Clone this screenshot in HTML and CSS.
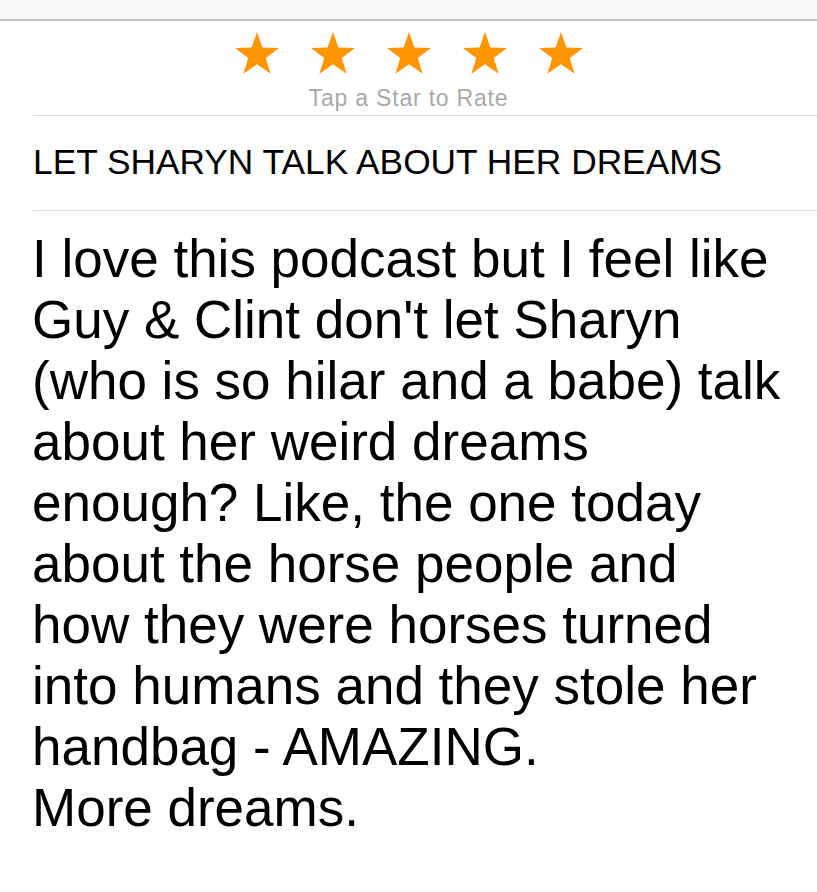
FILE: index.html
```html
<!DOCTYPE html>
<html lang="en">
<head>
<meta charset="utf-8">
<title>Write a Review</title>
<link rel="stylesheet" href="styles.css">
</head>
<body>
<div class="topbar"></div>
<main class="review">
  <section class="rating">
    <div class="stars">
      <svg class="star" viewBox="0 0 44 42"><polygon points="22,0 27.43,15.62 43.97,15.96 30.79,25.96 35.58,41.79 22,32.34 8.42,41.79 13.21,25.96 0.03,15.96 16.57,15.62"/></svg>
      <svg class="star" viewBox="0 0 44 42"><polygon points="22,0 27.43,15.62 43.97,15.96 30.79,25.96 35.58,41.79 22,32.34 8.42,41.79 13.21,25.96 0.03,15.96 16.57,15.62"/></svg>
      <svg class="star" viewBox="0 0 44 42"><polygon points="22,0 27.43,15.62 43.97,15.96 30.79,25.96 35.58,41.79 22,32.34 8.42,41.79 13.21,25.96 0.03,15.96 16.57,15.62"/></svg>
      <svg class="star" viewBox="0 0 44 42"><polygon points="22,0 27.43,15.62 43.97,15.96 30.79,25.96 35.58,41.79 22,32.34 8.42,41.79 13.21,25.96 0.03,15.96 16.57,15.62"/></svg>
      <svg class="star" viewBox="0 0 44 42"><polygon points="22,0 27.43,15.62 43.97,15.96 30.79,25.96 35.58,41.79 22,32.34 8.42,41.79 13.21,25.96 0.03,15.96 16.57,15.62"/></svg>
    </div>
    <p class="hint">Tap a Star to Rate</p>
  </section>
  <div class="fields">
    <h1 class="title">LET SHARYN TALK ABOUT HER DREAMS</h1>
    <p class="body">I love this podcast but I feel like Guy &amp; Clint don't let Sharyn (who is so hilar and a babe) talk about her weird dreams enough? Like, the one today about the horse people and how they were horses turned into humans and they stole her handbag - AMAZING.<br>More dreams.</p>
  </div>
</main>
</body>
</html>
```

FILE: styles.css
```css
html, body {
  margin: 0;
  padding: 0;
  background: #ffffff;
}

body {
  font-family: "Liberation Sans", Arial, sans-serif;
  color: #000000;
  width: 817px;
  height: 892px;
  overflow: hidden;
}

.topbar {
  height: 19px;
  background: #f8f8f8;
  border-bottom: 2px solid #c4c4c4;
}

.review {
  display: flex;
  flex-direction: column;
}

.rating {
  display: flex;
  flex-direction: column;
  align-items: center;
  padding-top: 11px;
}

.rating::after {
  content: "";
  display: block;
  align-self: stretch;
  height: 1px;
  margin-top: 4px;
  margin-left: 33px;
  background: #dcdcdc;
}

.stars {
  display: flex;
  gap: 32px;
  height: 42px;
}

.star {
  width: 44px;
  height: 42px;
  fill: #ff9500;
  display: block;
}

.hint {
  margin: 11px 0 0 0;
  font-size: 23px;
  line-height: 26px;
  letter-spacing: 0.8px;
  color: #a9a9a9;
}

.fields {
  margin-left: 33px;
  display: flex;
  flex-direction: column;
}

.title {
  margin: 0;
  padding: 26px 0 28px 0;
  font-size: 35.3px;
  line-height: 40px;
  font-weight: normal;
  border-bottom: 1px solid #dcdcdc;
}

.body {
  margin: 0;
  padding-top: 17px;
  margin-left: -1px;
  width: 750px;
  font-size: 53px;
  line-height: 61px;
}
```
